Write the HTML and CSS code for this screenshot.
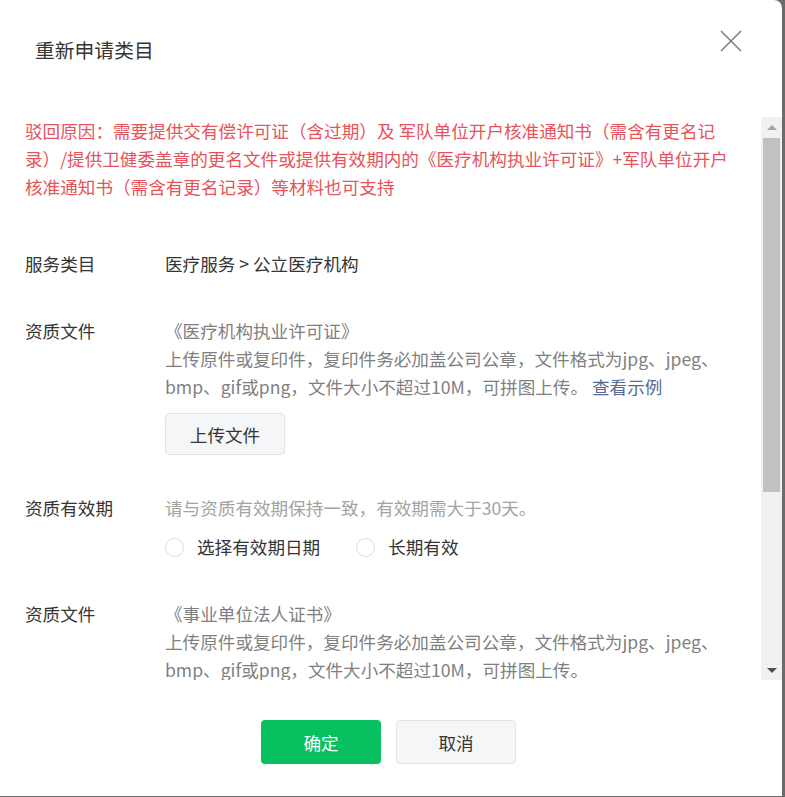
FILE: index.html
```html
<!DOCTYPE html>
<html lang="zh-CN">
<head>
  <meta charset="UTF-8" />
  <meta name="viewport" content="width=device-width, initial-scale=1.0" />
  <title>重新申请类目</title>
  <link rel="stylesheet" href="styles.css">
</head>
<body>
  <div class="dialog">
    <div class="dialog-hd">
      <h3 class="dialog-title">重新申请类目</h3>
      <button class="dialog-close" title="关闭">
        <svg width="22" height="22" viewBox="0 0 22 22">
          <path d="M1 1L21 21M21 1L1 21" stroke="#7f7f7f" stroke-width="1.6" fill="none" />
        </svg>
      </button>
    </div>

    <div class="dialog-bd">
      <div class="scroll-content">
        <p class="reject-reason">驳回原因：需要提供交有偿许可证（含过期）及 军队单位开户核准通知书（需含有更名记录）/提供卫健委盖章的更名文件或提供有效期内的《医疗机构执业许可证》+军队单位开户核准通知书（需含有更名记录）等材料也可支持</p>

        <div class="form-list">
          <div class="form-row">
            <label class="form-label">服务类目</label>
            <div class="form-value">医疗服务 &gt; 公立医疗机构</div>
          </div>

          <div class="form-row">
            <label class="form-label">资质文件</label>
            <div class="form-value">
              <div class="form-desc">《医疗机构执业许可证》</div>
              <div class="form-desc">上传原件或复印件，复印件务必加盖公司公章，文件格式为jpg、jpeg、bmp、gif或png，文件大小不超过10M，可拼图上传。 <a href="#" class="link">查看示例</a></div>
              <button class="btn btn-default btn-upload">上传文件</button>
            </div>
          </div>

          <div class="form-row">
            <label class="form-label">资质有效期</label>
            <div class="form-value">
              <div class="form-tips">请与资质有效期保持一致，有效期需大于30天。</div>
              <div class="radio-group">
                <label class="radio"><input type="radio" name="valid-1" /><span>选择有效期日期</span></label>
                <label class="radio"><input type="radio" name="valid-1" /><span>长期有效</span></label>
              </div>
            </div>
          </div>

          <div class="form-row">
            <label class="form-label">资质文件</label>
            <div class="form-value">
              <div class="form-desc">《事业单位法人证书》</div>
              <div class="form-desc">上传原件或复印件，复印件务必加盖公司公章，文件格式为jpg、jpeg、bmp、gif或png，文件大小不超过10M，可拼图上传。</div>
              <button class="btn btn-default btn-upload">上传文件</button>
            </div>
          </div>

          <div class="form-row">
            <label class="form-label">资质有效期</label>
            <div class="form-value">
              <div class="form-tips">请与资质有效期保持一致，有效期需大于30天。</div>
              <div class="radio-group">
                <label class="radio"><input type="radio" name="valid-2" /><span>选择有效期日期</span></label>
                <label class="radio"><input type="radio" name="valid-2" /><span>长期有效</span></label>
              </div>
            </div>
          </div>
        </div>
      </div>

      <!-- 滚动条 -->
      <div class="scrollbar">
        <span class="scrollbar-btn scrollbar-up"></span>
        <div class="scrollbar-track">
          <div class="scrollbar-thumb"></div>
        </div>
        <span class="scrollbar-btn scrollbar-down"></span>
      </div>
    </div>

    <div class="dialog-ft">
      <button class="btn btn-primary">确定</button>
      <button class="btn btn-default">取消</button>
    </div>
  </div>
</body>
</html>
```

FILE: styles.css
```css
* {
  box-sizing: border-box;
}

body {
  margin: 0;
  background-color: #6b6b6b;
  font-family: "Noto Sans CJK SC", "Noto Sans", sans-serif;
  font-size: 17.6px;
  line-height: 28px;
  color: #353535;
}

.dialog {
  width: 782px;
  height: 796px;
  background-color: #fff;
  border-top-right-radius: 8px;
  box-shadow: 0 1px 0 #1f1f1f;
  display: flex;
  flex-direction: column;
}

.dialog-hd {
  height: 117px;
  flex-shrink: 0;
  display: flex;
  justify-content: space-between;
  align-items: flex-start;
  padding: 30px 40px 0 35px;
}

.dialog-title {
  margin: 0;
  font-size: 19.8px;
  font-weight: normal;
  line-height: 40px;
}

.dialog-close {
  width: 22px;
  height: 22px;
  padding: 0;
  border: none;
  background: none;
  cursor: pointer;
}

.dialog-close svg {
  display: block;
}

.dialog-bd {
  flex: 1;
  min-height: 0;
  display: flex;
}

.scroll-content {
  flex: 1;
  overflow: hidden;
  padding: 0 30px 0 25px;
}

.scrollbar {
  width: 21px;
  flex-shrink: 0;
  background-color: #f1f1f1;
  display: flex;
  flex-direction: column;
}

.scrollbar-btn {
  height: 20px;
  flex-shrink: 0;
  display: flex;
  align-items: center;
  justify-content: center;
}

.scrollbar-btn::before {
  content: "";
  border-left: 5px solid transparent;
  border-right: 5px solid transparent;
}

.scrollbar-up::before {
  border-bottom: 5px solid #a3a3a3;
}

.scrollbar-down::before {
  border-top: 5px solid #505050;
}

.scrollbar-track {
  flex: 1;
  padding: 1px 2px;
}

.scrollbar-thumb {
  height: 354px;
  background-color: #c1c1c1;
}

.reject-reason {
  margin: 0;
  color: #e6535a;
}

.form-list {
  margin-top: 49px;
  display: flex;
  flex-direction: column;
  gap: 39px;
}

.form-row {
  display: flex;
}

.form-label {
  width: 140px;
  flex-shrink: 0;
}

.form-value {
  flex: 1;
}

.form-desc {
  color: #7f7f7f;
}

.form-tips {
  color: #a3a3a3;
}

.link {
  color: #576b95;
  text-decoration: none;
}

.btn {
  width: 120px;
  height: 44px;
  padding: 0;
  border: 1px solid transparent;
  border-radius: 4px;
  font-family: inherit;
  font-size: 17.6px;
  cursor: pointer;
}

.btn-default {
  background-color: #f5f6f7;
  border-color: #e3e4e6;
  color: #353535;
}

.btn-primary {
  background-color: #07c160;
  color: #fff;
}

.btn-upload {
  display: block;
  height: 42px;
  margin-top: 12px;
}

.radio-group {
  display: flex;
  gap: 36px;
  margin-top: 11px;
}

.radio {
  display: flex;
  align-items: center;
  gap: 13px;
  cursor: pointer;
}

.radio input {
  appearance: none;
  width: 19px;
  height: 19px;
  margin: 0;
  border: 1px solid #dcdcdc;
  border-radius: 50%;
  background-color: #fff;
}

.dialog-ft {
  height: 116px;
  flex-shrink: 0;
  display: flex;
  justify-content: center;
  gap: 15px;
  padding: 40px 5px 0 0;
}
```
